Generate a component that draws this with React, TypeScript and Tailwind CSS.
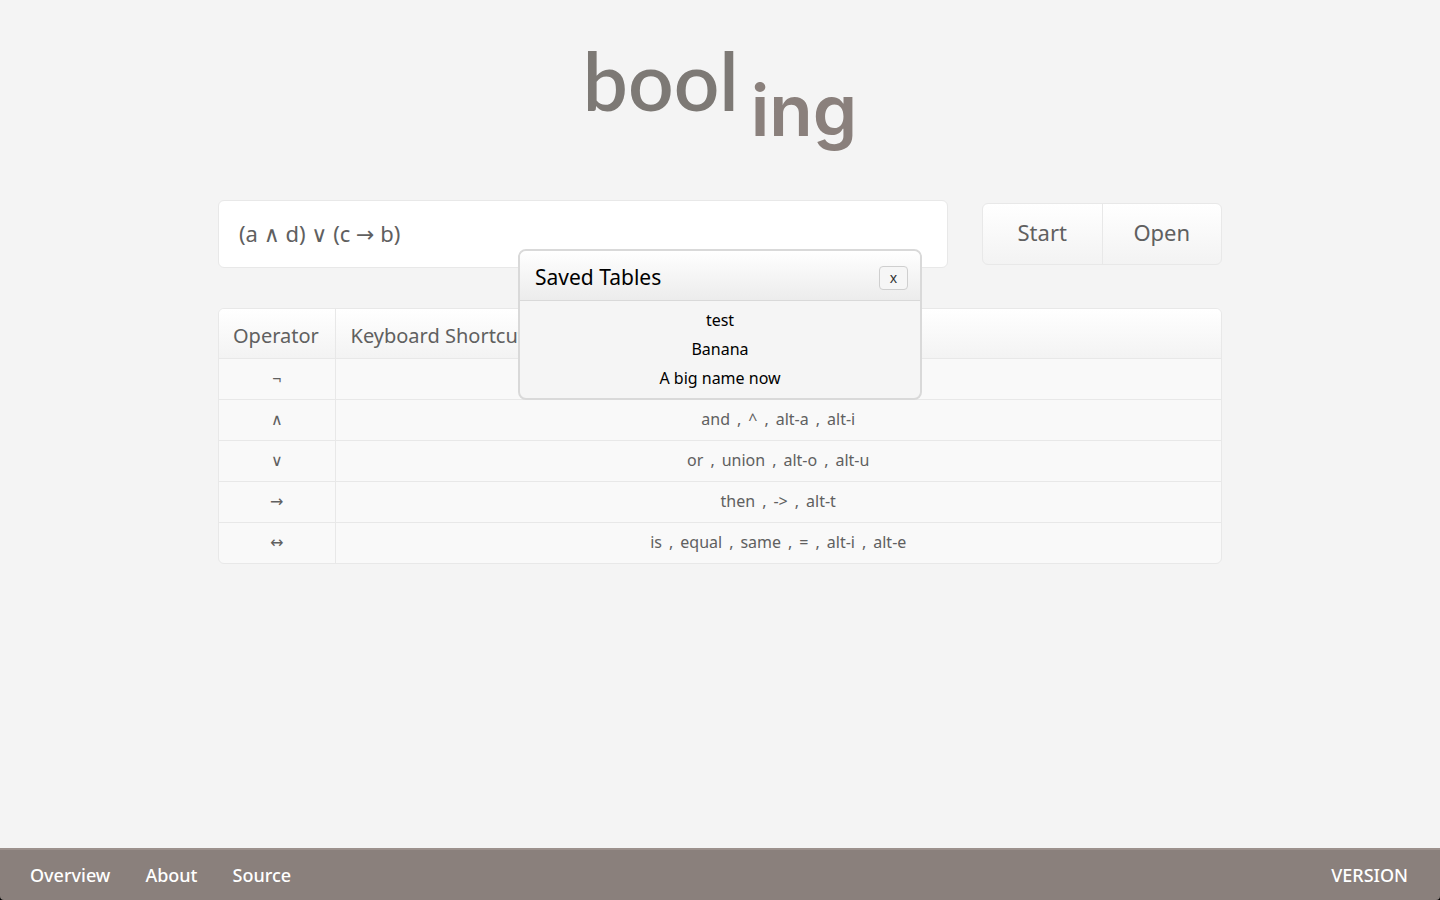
import { Fragment, useState } from "react";

const operators: { symbol: string; shortcuts: string[] }[] = [
  { symbol: "¬", shortcuts: [] },
  { symbol: "∧", shortcuts: ["and", "^", "alt-a", "alt-i"] },
  { symbol: "∨", shortcuts: ["or", "union", "alt-o", "alt-u"] },
  { symbol: "→", shortcuts: ["then", "->", "alt-t"] },
  { symbol: "↔", shortcuts: ["is", "equal", "same", "=", "alt-i", "alt-e"] },
];

const savedTables = ["test", "Banana", "A big name now"];

function Logo() {
  return (
    <h1 className="flex justify-center gap-3 leading-[96px]">
      <span className="font-['Lato',sans-serif] text-[80px] leading-[96px] font-semibold text-[#7d7975]">
        bool
      </span>
      <span className="mt-[30px] font-['Inter',sans-serif] text-[71px] leading-[96px] font-semibold text-[#8a807c]">
        ing
      </span>
    </h1>
  );
}

function ExpressionForm({ onOpen }: { onOpen: () => void }) {
  const [expression, setExpression] = useState("(a ∧ d) ∨ (c → b)");
  return (
    <form className="flex items-center gap-[34px]" onSubmit={(e) => e.preventDefault()}>
      <input
        type="text"
        aria-label="Boolean expression"
        value={expression}
        onChange={(e) => setExpression(e.target.value)}
        className="h-[68px] min-w-0 flex-1 rounded-md border border-[#e8e8e8] bg-white px-5 pb-0.5 text-[22px] text-[#606060] outline-none"
      />
      <div className="flex h-[62px] w-60 overflow-hidden rounded-md border border-[#e8e8e8] bg-linear-to-b from-white to-[#f3f3f3] text-[22px]">
        <button type="submit" className="flex-1 border-r border-[#e8e8e8] pb-1">
          Start
        </button>
        <button type="button" onClick={onOpen} className="flex-1 pb-1">
          Open
        </button>
      </div>
    </form>
  );
}

function OperatorTable() {
  return (
    <div className="mt-10 overflow-hidden rounded-md border border-[#e8e8e8] bg-[#f9f9f9]">
      <table className="w-full border-collapse">
        <thead>
          <tr className="h-[49px] bg-linear-to-b from-white to-[#f3f3f3] text-left text-xl">
            <th scope="col" className="w-[116px] border-r border-[#e8e8e8] px-[14px] pt-1.5 font-normal">
              Operator
            </th>
            <th scope="col" className="px-[15px] pt-1.5 font-normal">
              Keyboard Shortcuts
            </th>
          </tr>
        </thead>
        <tbody>
          {operators.map((op) => (
            <tr key={op.symbol} className="h-[41px] border-t border-[#e8e8e8] text-center text-base">
              <td className="border-r border-[#e8e8e8] pb-0.5">{op.symbol}</td>
              <td className="pb-0.5">
                <div className="flex justify-center gap-[7px]">
                  {op.shortcuts.map((key, i) => (
                    <Fragment key={key}>
                      {i > 0 && <span>,</span>}
                      <span>{key}</span>
                    </Fragment>
                  ))}
                </div>
              </td>
            </tr>
          ))}
        </tbody>
      </table>
    </div>
  );
}

function SavedTablesDialog({ onClose }: { onClose: () => void }) {
  return (
    <section
      role="dialog"
      aria-labelledby="saved-title"
      className="absolute top-[249px] left-1/2 w-[404px] -translate-x-1/2 overflow-hidden rounded-lg border-2 border-[#d9d9d9] bg-[#f5f5f5] text-black"
    >
      <header className="flex h-[50px] items-center justify-between border-b border-[#d9d9d9] bg-linear-to-b from-white to-[#ececec] pr-3 pl-[15px]">
        <h2 id="saved-title" className="pt-1 text-[21px]">
          Saved Tables
        </h2>
        <button
          type="button"
          aria-label="Close"
          onClick={onClose}
          className="mt-1 flex h-6 w-[29px] items-center justify-center rounded-sm border border-[#cfcfcf] bg-[#f6f6f6] text-sm text-[#333]"
        >
          x
        </button>
      </header>
      <ul className="pt-1 pb-[6px] text-center text-base">
        {savedTables.map((name) => (
          <li key={name}>
            <button type="button" className="h-[29px]">
              {name}
            </button>
          </li>
        ))}
      </ul>
    </section>
  );
}

function Footer() {
  return (
    <footer className="flex h-[52px] items-center rounded-b-[4px] border-t-2 border-[#9c918d] bg-[#8a807c] pr-8 pl-[30px] text-lg font-medium text-white">
      <nav className="flex gap-[35px]">
        <a href="#overview">Overview</a>
        <a href="#about">About</a>
        <a href="#source">Source</a>
      </nav>
      <a href="#version" className="ml-auto">
        VERSION
      </a>
    </footer>
  );
}

export default function App() {
  const [open, setOpen] = useState(true);
  return (
    <div className="bg-black font-['Noto_Sans','DejaVu_Sans',sans-serif] text-[#606060]">
      <div className="relative flex min-h-screen flex-col">
        <main className="flex-1 bg-[#f4f4f4]">
          <div className="mx-auto w-full max-w-[1004px] pt-8">
            <Logo />
            <div className="mt-[42px]">
              <ExpressionForm onOpen={() => setOpen(true)} />
            </div>
            <OperatorTable />
          </div>
        </main>
        <Footer />
        {open && <SavedTablesDialog onClose={() => setOpen(false)} />}
      </div>
    </div>
  );
}
